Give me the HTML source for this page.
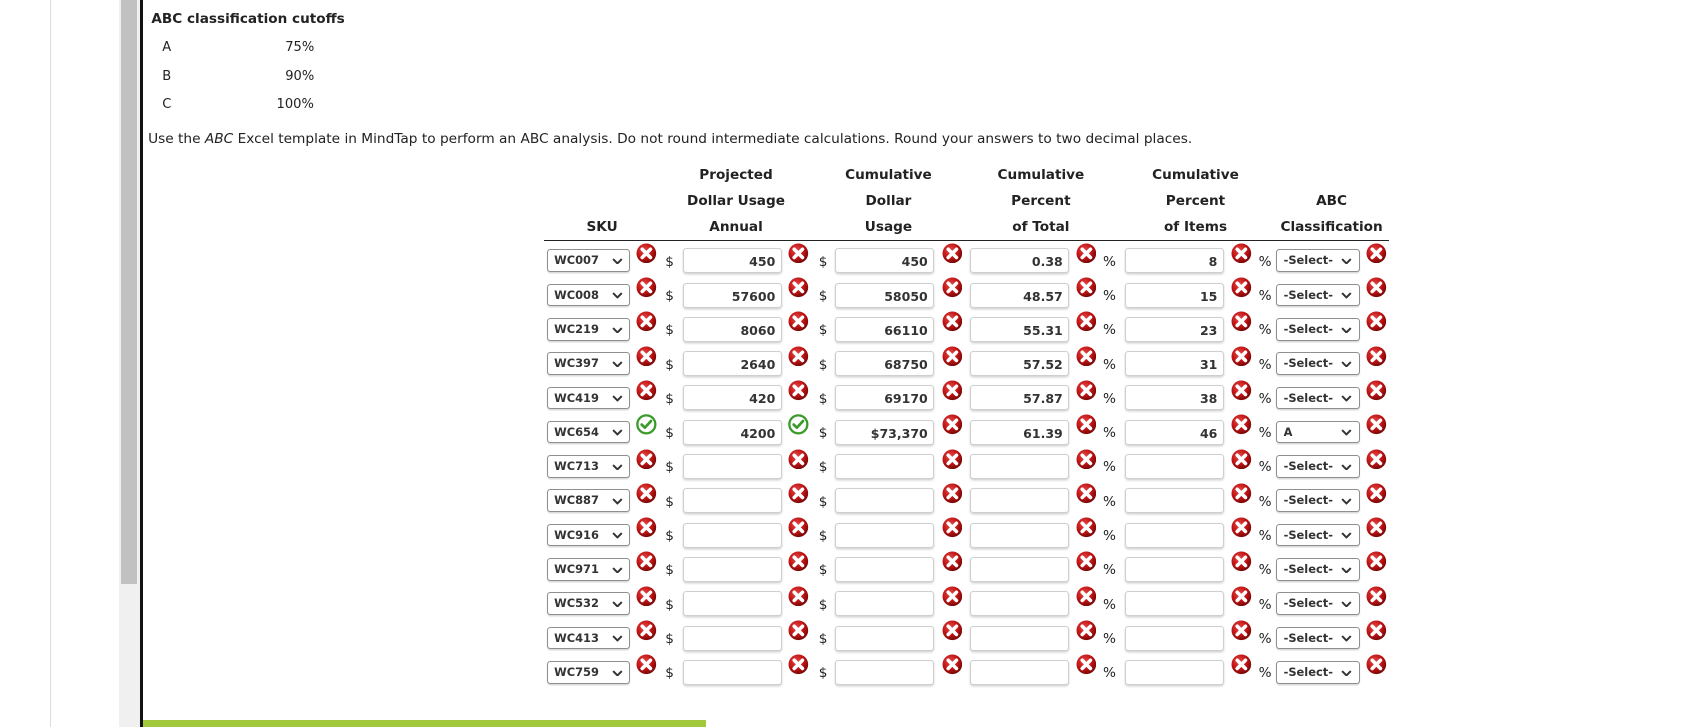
<!DOCTYPE html>
<html><head><meta charset="utf-8">
<style>
html,body{margin:0;padding:0;background:#fff;overflow:hidden}
body{width:1706px;height:727px;position:relative;font-family:"DejaVu Sans","Liberation Sans",sans-serif;color:#222}
#w{position:absolute;left:0;top:0;width:1567px;height:668px;zoom:1.0888}
.a{position:absolute}
.t{font-size:12px}
.h{font-weight:bold;font-size:12.5px;text-align:center;width:130px;margin-left:-65px}
.sel{position:absolute;width:69px;height:19px;border:1px solid #8f8f8f;border-radius:3px;background:#fff;font-size:10.5px;font-weight:bold;color:#333;line-height:19px;padding-left:6px;box-sizing:content-box;box-shadow:0 1px 1px rgba(0,0,0,.15)}
.sel svg{position:absolute;right:6px;top:7px}
.in{position:absolute;width:91px;height:23px;border:1px solid #cfcfcf;border-radius:3px;background:#fff;font-size:11.5px;font-weight:bold;color:#333;line-height:23px;text-align:right;padding-right:5px;box-sizing:border-box;box-shadow:0 1px 2px rgba(0,0,0,.18)}
.u{position:absolute;font-size:12.5px;color:#222}
.ic{position:absolute;width:19px;height:19px}
</style></head><body>
<div id="w">
<div class="a" style="left:46px;top:0;width:1px;height:668px;background:#ddd"></div>
<div class="a" style="left:109px;top:0;width:20px;height:668px;background:#f0f0f0"></div>
<div class="a" style="left:111px;top:0;width:15px;height:536px;background:#c1c1c1"></div>
<div class="a" style="left:129px;top:0;width:2px;height:668px;background:#111"></div>
<div class="a" style="left:131px;top:661px;width:517px;height:7px;background:#a2c83c"></div>

<div class="a t" style="left:139px;top:10px;font-weight:bold;font-size:12.5px">ABC classification cutoffs</div>
<div class="a t" style="left:149px;top:37px">A</div><div class="a t" style="left:262px;top:37px">75%</div>
<div class="a t" style="left:149px;top:63px">B</div><div class="a t" style="left:262px;top:63px">90%</div>
<div class="a t" style="left:149px;top:89px">C</div><div class="a t" style="left:254px;top:89px">100%</div>
<div class="a t" style="left:136px;top:120px;font-size:12.6px">Use the <i>ABC</i> Excel template in MindTap to perform an ABC analysis. Do not round intermediate calculations. Round your answers to two decimal places.</div>

<div class="a h" style="left:676px;top:153px">Projected</div>
<div class="a h" style="left:816px;top:153px">Cumulative</div>
<div class="a h" style="left:956px;top:153px">Cumulative</div>
<div class="a h" style="left:1098px;top:153px">Cumulative</div>
<div class="a h" style="left:676px;top:177px">Dollar Usage</div>
<div class="a h" style="left:816px;top:177px">Dollar</div>
<div class="a h" style="left:956px;top:177px">Percent</div>
<div class="a h" style="left:1098px;top:177px">Percent</div>
<div class="a h" style="left:1223px;top:177px">ABC</div>
<div class="a h" style="left:553px;top:201px">SKU</div>
<div class="a h" style="left:676px;top:201px">Annual</div>
<div class="a h" style="left:816px;top:201px">Usage</div>
<div class="a h" style="left:956px;top:201px">of Total</div>
<div class="a h" style="left:1098px;top:201px">of Items</div>
<div class="a h" style="left:1223px;top:201px">Classification</div>
<div class="a" style="left:500px;top:220px;width:776px;height:1px;background:#222"></div>

<svg width="0" height="0" style="position:absolute">
<defs>
<radialGradient id="rg" cx="40%" cy="35%" r="65%"><stop offset="0" stop-color="#e84a4a"/><stop offset="0.6" stop-color="#c01414"/><stop offset="1" stop-color="#7a0606"/></radialGradient>
<symbol id="x" viewBox="0 0 20 20"><circle cx="10" cy="10" r="9.5" fill="url(#rg)"/><path d="M6 6L14 14M14 6L6 14" stroke="#fff" stroke-width="3.4" stroke-linecap="round"/></symbol>
<symbol id="c" viewBox="0 0 20 20"><circle cx="10" cy="10" r="8.7" fill="#fff" stroke="#3a9a2a" stroke-width="2.2"/><path d="M5.5 10.2L8.6 13.2L14.5 6.8" fill="none" stroke="#3a9a2a" stroke-width="2.6" stroke-linecap="round" stroke-linejoin="round"/></symbol>
<symbol id="v" viewBox="0 0 10 6"><path d="M1 1L5 5L9 1" fill="none" stroke="#333" stroke-width="1.8"/></symbol>
</defs></svg>

<div id="rows"></div>
</div>
<script>
var d=[["WC007","450","450","0.38","8","-Select-",0],["WC008","57600","58050","48.57","15","-Select-",0],["WC219","8060","66110","55.31","23","-Select-",0],["WC397","2640","68750","57.52","31","-Select-",0],["WC419","420","69170","57.87","38","-Select-",0],["WC654","4200","$73,370","61.39","46","A",1],["WC713","","","","","-Select-",0],["WC887","","","","","-Select-",0],["WC916","","","","","-Select-",0],["WC971","","","","","-Select-",0],["WC532","","","","","-Select-",0],["WC413","","","","","-Select-",0],["WC759","","","","","-Select-",0]];
var h="";
d.forEach(function(r,i){var y=230+i*31.5;
function ic(x,k){return '<svg class="ic" style="left:'+x+'px;top:'+(y-7)+'px"><use href="#'+k+'"/></svg>';}
function sel(x,t){return '<div class="sel" style="left:'+x+'px;top:'+(y-1)+'px">'+t+'<svg width="10" height="6"><use href="#v"/></svg></div>';}
h+=sel(502,r[0]);
h+=ic(584,r[6]?"c":"x");
h+='<div class="u" style="left:611px;top:'+(y+3)+'px">$</div>';
h+='<div class="in" style="left:627px;top:'+(y-2)+'px">'+r[1]+'</div>';
h+=ic(724,r[6]?"c":"x");
h+='<div class="u" style="left:752px;top:'+(y+3)+'px">$</div>';
h+='<div class="in" style="left:767px;top:'+(y-2)+'px">'+r[2]+'</div>';
h+=ic(865,"x");
h+='<div class="in" style="left:891px;top:'+(y-2)+'px">'+r[3]+'</div>';
h+=ic(988,"x");
h+='<div class="u" style="left:1013px;top:'+(y+3)+'px">%</div>';
h+='<div class="in" style="left:1033px;top:'+(y-2)+'px">'+r[4]+'</div>';
h+=ic(1131,"x");
h+='<div class="u" style="left:1156px;top:'+(y+3)+'px">%</div>';
h+=sel(1172,r[5]);
h+=ic(1255,"x");
});
document.getElementById("rows").innerHTML=h;
</script>
</body></html>
